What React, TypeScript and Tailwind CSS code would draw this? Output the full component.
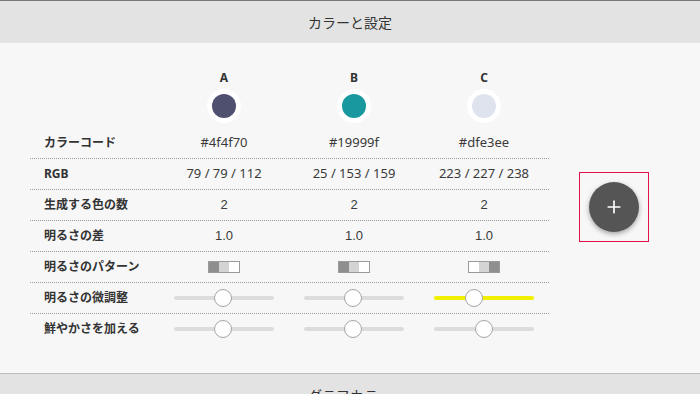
import { Plus } from "lucide-react";

type Col = {
  name: string;
  hex: string;
  rgb: string;
  count: string;
  diff: string;
  pattern: string[];
  tune: number;
  tuneActive?: boolean;
  vivid: number;
};

const cols: Col[] = [
  { name: "A", hex: "#4f4f70", rgb: "79 / 79 / 112", count: "2", diff: "1.0", pattern: ["#8f8f8f", "#d4d4d4", "#ffffff"], tune: 49, vivid: 49 },
  { name: "B", hex: "#19999f", rgb: "25 / 153 / 159", count: "2", diff: "1.0", pattern: ["#8f8f8f", "#d4d4d4", "#ffffff"], tune: 49, vivid: 49 },
  { name: "C", hex: "#dfe3ee", rgb: "223 / 227 / 238", count: "2", diff: "1.0", pattern: ["#ffffff", "#d4d4d4", "#8f8f8f"], tune: 40, tuneActive: true, vivid: 50 },
];

function Slider({ pos, active }: { pos: number; active?: boolean }) {
  return (
    <div className="relative w-[100px] h-[18px] flex items-center">
      <div className={`w-full h-[4px] rounded-full ${active ? "bg-[#f0f000]" : "bg-[#dcdcdc]"}`} />
      <div
        className="absolute top-0 w-[18px] h-[18px] rounded-full bg-white border border-[#a5a5a5]"
        style={{ left: pos - 9 }}
      />
    </div>
  );
}

function Row({ label, last, children }: { label: string; last?: boolean; children: (c: Col) => React.ReactNode }) {
  return (
    <div className={`flex h-[31px] ${last ? "" : "border-b border-dotted border-[#9a9a9a]"}`}>
      <div className="w-[129px] pl-[14px] flex items-center text-[12px] font-bold text-[#333]">{label}</div>
      {cols.map((c) => (
        <div key={c.name} className="w-[130px] flex items-center justify-center text-[#3a3a3a]">
          {children(c)}
        </div>
      ))}
    </div>
  );
}

function SectionHeader({ title }: { title: string }) {
  return (
    <div className="h-[42px] shrink-0 bg-[#e3e3e3] flex items-center justify-center text-[14px] text-[#333]">
      {title}
    </div>
  );
}

export default function App() {
  const num = "text-[13px] font-['Liberation_Sans',sans-serif]";
  const txt = "text-[13px]";
  return (
    <div className="w-[700px] h-[394px] overflow-hidden flex flex-col bg-[#f7f7f7] font-['Noto_Sans','Noto_Sans_CJK_JP',sans-serif]">
      <div className="border-t border-[#777]">
        <SectionHeader title="カラーと設定" />
      </div>

      <div className="h-[330px] shrink-0 flex items-center pb-[2px]">
        <div className="ml-[30px] w-[519px]">
          <div className="flex">
            <div className="w-[129px]" />
            {cols.map((c) => (
              <div key={c.name} className="w-[130px] flex flex-col items-center">
                <span className="text-[12px] font-bold leading-[16px] text-[#333]">{c.name}</span>
                <div className="mt-[3px] mb-[5px] w-[34px] h-[34px] rounded-full bg-white flex items-center justify-center">
                  <div className="w-[24px] h-[24px] rounded-full" style={{ background: c.hex }} />
                </div>
              </div>
            ))}
          </div>

          <Row label="カラーコード">{(c) => <span className={txt}>{c.hex}</span>}</Row>
          <Row label="RGB">{(c) => <span className={txt}>{c.rgb}</span>}</Row>
          <Row label="生成する色の数">{(c) => <span className={num}>{c.count}</span>}</Row>
          <Row label="明るさの差">{(c) => <span className={num}>{c.diff}</span>}</Row>
          <Row label="明るさのパターン">
            {(c) => (
              <div className="flex w-[32px] h-[12px] border border-[#9a9a9a]">
                {c.pattern.map((p, i) => (
                  <div key={i} className="flex-1" style={{ background: p }} />
                ))}
              </div>
            )}
          </Row>
          <Row label="明るさの微調整">{(c) => <Slider pos={c.tune} active={c.tuneActive} />}</Row>
          <Row label="鮮やかさを加える" last>
            {(c) => <Slider pos={c.vivid} />}
          </Row>
        </div>

        <div className="ml-[30px] w-[70px] h-[70px] border border-[#e2104a] flex items-center justify-center">
          <div className="w-[50px] h-[50px] rounded-full bg-[#555] shadow-[0_2px_5px_rgba(0,0,0,0.35)] flex items-center justify-center">
            <Plus className="w-[20px] h-[20px] text-white" strokeWidth={2} />
          </div>
        </div>
      </div>

      <div className="border-t border-[#bcbcbc]">
        <SectionHeader title="グラフカラー" />
      </div>
    </div>
  );
}
